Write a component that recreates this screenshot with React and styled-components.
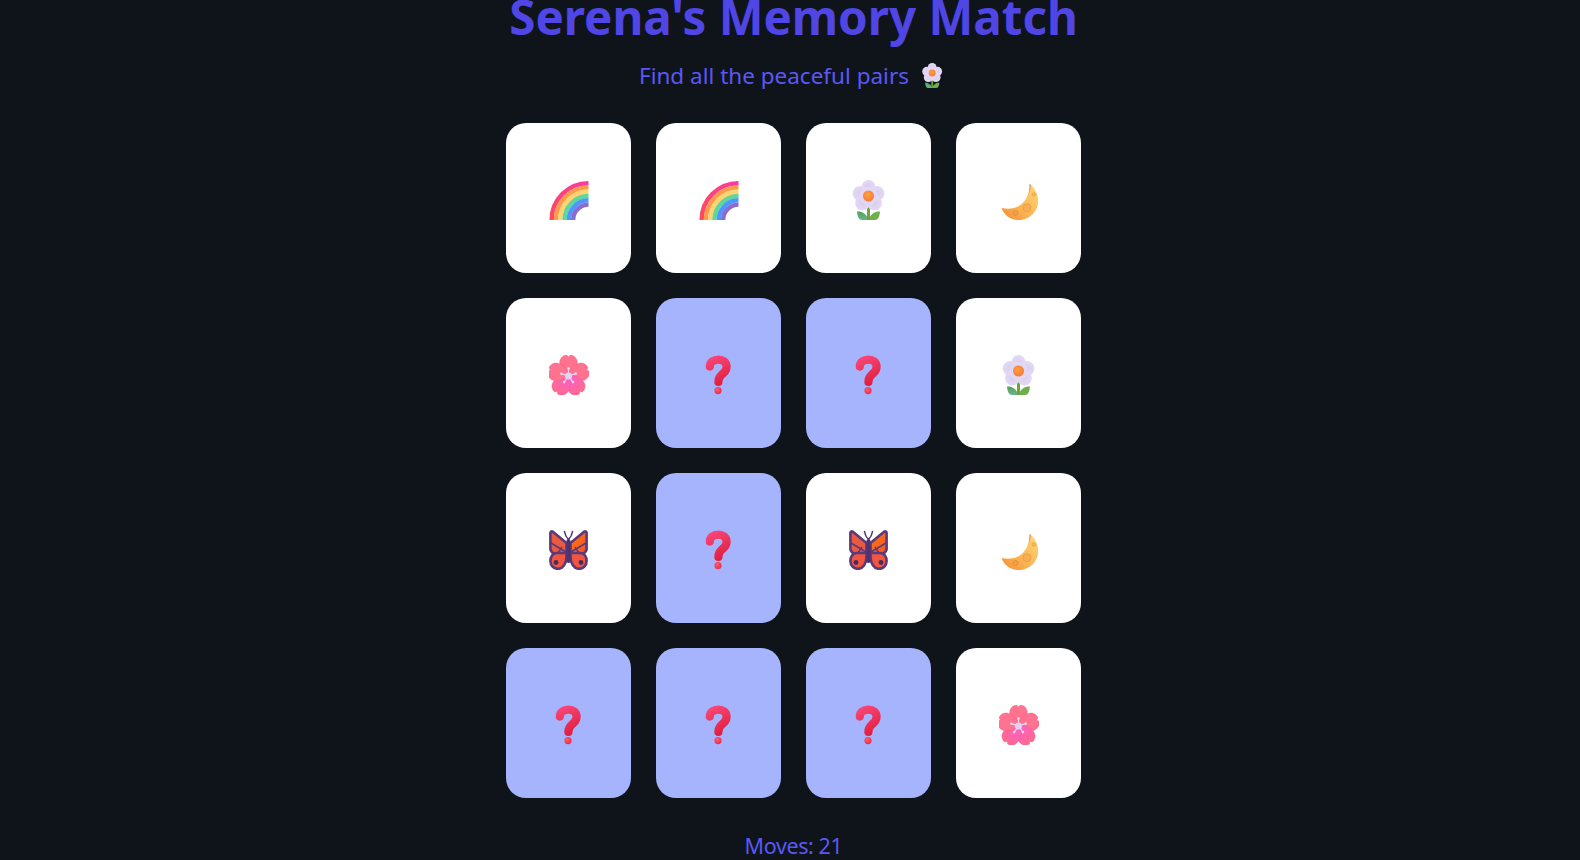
import React from 'react';
import styled, { createGlobalStyle } from 'styled-components';

const GlobalStyle = createGlobalStyle`
  html, body {
    margin: 0;
    padding: 0;
    background: #0f141a;
  }
`;

const Page = styled.div`
  height: 100vh;
  overflow: hidden;
  padding-left: 7px;
  box-sizing: border-box;
  display: flex;
  flex-direction: column;
  align-items: center;
  background: #0f141a;
  font-family: "Noto Sans", "Open Sans", sans-serif;
`;

const Title = styled.h1`
  margin: -14px 0 0;
  flex-shrink: 0;
  font-size: 47.5px;
  line-height: 62px;
  font-weight: 700;
  color: #4f46e5;
  white-space: nowrap;
`;

const Subtitle = styled.p`
  margin: 7px 0 0;
  padding-right: 3px;
  flex-shrink: 0;
  height: 40px;
  display: flex;
  align-items: center;
  gap: 11px;
  font-size: 22.5px;
  color: #5a58f5;
`;

const Board = styled.div`
  margin-top: 28px;
  flex-shrink: 0;
  display: grid;
  grid-template-columns: repeat(4, 125px);
  grid-auto-rows: 150px;
  gap: 25px;
`;

const Card = styled.div`
  box-sizing: border-box;
  padding-top: 4px;
  border-radius: 20px;
  display: flex;
  align-items: center;
  justify-content: center;
  background: ${(p) => (p.$hidden ? '#a5b4fc' : '#ffffff')};
`;

const Moves = styled.p`
  margin: 32px 0 0;
  flex-shrink: 0;
  font-size: 21.5px;
  letter-spacing: -0.4px;
  line-height: 32px;
  color: #5a58f5;
`;

const Rainbow = () => (
  <>
    <defs>
      <linearGradient id="rainbowOuter" x1="0" y1="1" x2="1" y2="0">
        <stop offset="0" stopColor="#ff4a5c" />
        <stop offset="1" stopColor="#fb3a9e" />
      </linearGradient>
    </defs>
    <path d="M2.6 40A36.9 36.9 0 0 1 39.5 3.1" stroke="url(#rainbowOuter)" strokeWidth="4.4" fill="none" />
    <path d="M6.9 40A32.6 32.6 0 0 1 39.5 7.4" stroke="#ff9a4d" strokeWidth="4.4" fill="none" />
    <path d="M11.2 40A28.3 28.3 0 0 1 39.5 11.7" stroke="#ffd36f" strokeWidth="4.4" fill="none" />
    <path d="M15.5 40A24 24 0 0 1 39.5 16" stroke="#5fd79c" strokeWidth="4.4" fill="none" />
    <path d="M19.8 40A19.7 19.7 0 0 1 39.5 20.3" stroke="#4f97ff" strokeWidth="4.4" fill="none" />
    <path d="M24.1 40A15.4 15.4 0 0 1 39.5 24.6" stroke="#8c6bd1" strokeWidth="4.4" fill="none" />
  </>
);

const Daisy = () => (
  <>
    <defs>
      <radialGradient id="daisyPetal" cx="0.5" cy="0.5" r="0.6">
        <stop offset="0" stopColor="#d9cdf0" />
        <stop offset="1" stopColor="#e6dcf5" />
      </radialGradient>
      <radialGradient id="daisyHeart" cx="0.45" cy="0.4" r="0.6">
        <stop offset="0" stopColor="#ffa13d" />
        <stop offset="1" stopColor="#f5793c" />
      </radialGradient>
      <linearGradient id="daisyLeaf" x1="0" y1="0" x2="0" y2="1">
        <stop offset="0" stopColor="#4fa35a" />
        <stop offset="1" stopColor="#6fb28c" />
      </linearGradient>
    </defs>
    <path d="M8 31.5C12 31 17.5 33 19.3 40H13C10 40 8.4 36.6 8 31.5Z" fill="url(#daisyLeaf)" />
    <path d="M31 31.5C27 31 21.5 33 19.7 40H26C29 40 30.6 36.6 31 31.5Z" fill="#6fae4c" />
    <rect x="18" y="27" width="3" height="13" fill="#6aa82f" />
    <g fill="url(#daisyPetal)">
      <circle cx="19.5" cy="7" r="7" />
      <circle cx="11" cy="13.5" r="7.4" />
      <circle cx="28" cy="13.5" r="7.4" />
      <circle cx="13.5" cy="23" r="7.4" />
      <circle cx="25.5" cy="23" r="7.4" />
      <circle cx="19.5" cy="16" r="9" />
    </g>
    <circle cx="19.5" cy="16" r="5.5" fill="url(#daisyHeart)" />
  </>
);

const Moon = () => (
  <>
    <defs>
      <linearGradient id="moonBody" x1="1" y1="0" x2="0" y2="1">
        <stop offset="0" stopColor="#ffd97c" />
        <stop offset="0.55" stopColor="#fcb552" />
        <stop offset="1" stopColor="#f28c38" />
      </linearGradient>
    </defs>
    <path
      d="M30.6 4C36 8 39.2 14 39.2 21C39.2 32 30 40 19.5 40C11.5 40 5 35 2.5 28C7 29 11 29 15 28C24 26 30.5 17 30.6 4Z"
      fill="url(#moonBody)"
    />
    <path d="M30.6 4C30.8 8 30.4 12 29.4 15.6C31 11 31.6 7 31.6 4.8Z" fill="#d9763a" />
    <circle cx="28" cy="27.7" r="4" fill="#f6ae52" stroke="#e99a45" strokeWidth="0.8" />
    <circle cx="16.5" cy="33" r="2.4" fill="#f0a04a" stroke="#de8a3f" strokeWidth="0.7" />
    <circle cx="34.8" cy="14.5" r="1.8" fill="#f3b45e" stroke="#e2a04c" strokeWidth="0.6" />
  </>
);

const petalAngles = [0, 72, 144, 216, 288];

const Blossom = () => (
  <>
    <defs>
      <linearGradient id="blossomBottom" x1="0" y1="0" x2="0" y2="1">
        <stop offset="0" stopColor="#ff6a8a" />
        <stop offset="1" stopColor="#fb5fd0" />
      </linearGradient>
    </defs>
    <g transform="translate(19.5 21)">
      {petalAngles.map((a) => (
        <path
          key={a}
          transform={`rotate(${a})`}
          d="M0 0C-6 -3 -8.8 -8 -8.8 -13.5C-8.8 -18 -5 -21 -1.8 -21L0 -19L1.8 -21C5 -21 8.8 -18 8.8 -13.5C8.8 -8 6 -3 0 0Z"
          fill={a === 144 || a === 216 ? 'url(#blossomBottom)' : '#ff7391'}
          stroke="#f2557c"
          strokeWidth="0.4"
        />
      ))}
      {petalAngles.map((a) => (
        <g key={a} transform={`rotate(${a})`}>
          <rect x="-0.6" y="-7.5" width="1.2" height="7.5" fill="#f2d8ee" />
          <circle cy="-7.5" r="1.3" fill="#f2d8ee" />
        </g>
      ))}
      <circle r="3.6" fill="#e3d2f0" />
    </g>
  </>
);

const Butterfly = () => (
  <>
    <defs>
      <linearGradient id="butterflyWing" x1="0" y1="0" x2="1" y2="1">
        <stop offset="0" stopColor="#ff7a00" />
        <stop offset="1" stopColor="#f2503a" />
      </linearGradient>
    </defs>
    <path d="M15.5 1.5C16 5 17.5 7.5 19.5 9.5C21.5 7.5 23 5 23.5 1.5" stroke="#5a3a78" strokeWidth="1.6" fill="none" strokeLinecap="round" />
    <path d="M3.6 1.6L17.5 13V24H5C2.8 22.4 1.4 21.4 1.4 19V3C1.4 1.6 2.6 1 3.6 1.6Z" fill="#ea5a41" stroke="#5a3a78" strokeWidth="2.6" strokeLinejoin="round" />
    <path d="M35.4 1.6L21.5 13V24H34C36.2 22.4 37.6 21.4 37.6 19V3C37.6 1.6 36.4 1 35.4 1.6Z" fill="url(#butterflyWing)" stroke="#5a3a78" strokeWidth="2.6" strokeLinejoin="round" />
    <path d="M2 13L17 22M37 13L22 22M13 17L9 23M26 17L30 23" stroke="#5a3a78" strokeWidth="1.5" fill="none" />
    <path d="M17.5 23H8C3.5 23 1.4 27 1.4 31C1.4 36 5 38.8 9 38.8C14 38.8 17.5 33 17.5 27Z" fill="#f2553f" stroke="#5a3a78" strokeWidth="2.6" strokeLinejoin="round" />
    <path d="M21.5 23H31C35.5 23 37.6 27 37.6 31C37.6 36 34 38.8 30 38.8C25 38.8 21.5 33 21.5 27Z" fill="#f2553f" stroke="#5a3a78" strokeWidth="2.6" strokeLinejoin="round" />
    <circle cx="7" cy="32.5" r="2.4" fill="#4a2b5c" />
    <circle cx="32" cy="32.5" r="2.4" fill="#4a2b5c" />
    <rect x="17.5" y="9" width="4" height="24" rx="2" fill="#4f3272" />
  </>
);

const Question = () => (
  <>
    <defs>
      <linearGradient id="questionMark" gradientUnits="userSpaceOnUse" x1="10" y1="2" x2="24" y2="30">
        <stop offset="0" stopColor="#f9497a" />
        <stop offset="1" stopColor="#e01d3c" />
      </linearGradient>
      <radialGradient id="questionDot" cx="0.4" cy="0.35" r="0.7">
        <stop offset="0" stopColor="#ff5c72" />
        <stop offset="1" stopColor="#e82a44" />
      </radialGradient>
    </defs>
    <path
      d="M10.8 11.6C10.8 7 14.8 4.6 19.4 4.6C24 4.6 27.6 7.2 27.6 11.8C27.6 15.6 25.4 17.6 23 19.4C21 21 19.4 22.6 19.4 27"
      stroke="url(#questionMark)"
      strokeWidth="8.2"
      strokeLinecap="round"
      fill="none"
    />
    <circle cx="19" cy="35.6" r="3.6" fill="url(#questionDot)" />
  </>
);

const emojis = {
  rainbow: Rainbow,
  daisy: Daisy,
  moon: Moon,
  blossom: Blossom,
  butterfly: Butterfly,
  question: Question,
};

const Emoji = ({ name, size = 40 }) => {
  const Drawing = emojis[name];
  return (
    <svg width={size} height={size} viewBox="0 0 40 40" style={{ display: 'block', flexShrink: 0 }}>
      <Drawing />
    </svg>
  );
};

// null means the card is still face down
const cards = [
  'rainbow', 'rainbow', 'daisy', 'moon',
  'blossom', null, null, 'daisy',
  'butterfly', null, 'butterfly', 'moon',
  null, null, null, 'blossom',
];

const App = () => (
  <>
    <GlobalStyle />
    <Page>
      <Title>Serena's Memory Match</Title>
      <Subtitle>
        Find all the peaceful pairs
        <Emoji name="daisy" size={25} />
      </Subtitle>
      <Board>
        {cards.map((card, i) => (
          <Card key={i} $hidden={!card}>
            <Emoji name={card || 'question'} />
          </Card>
        ))}
      </Board>
      <Moves>Moves: 21</Moves>
    </Page>
  </>
);

export default App;
